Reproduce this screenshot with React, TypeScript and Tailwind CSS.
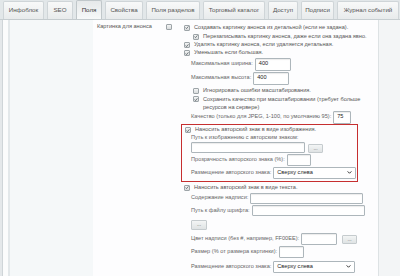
import React from 'react';

const tabs = [
  { label: 'Инфоблок', w: 'w-[41px]' },
  { label: 'SEO', w: 'w-[26px]' },
  { label: 'Поля', w: 'w-[26px]', active: true },
  { label: 'Свойства', w: 'w-[38px]' },
  { label: 'Поля разделов', w: 'w-[54px]' },
  { label: 'Торговый каталог', w: 'w-[62px]' },
  { label: 'Доступ', w: 'w-[30px]' },
  { label: 'Подписи', w: 'w-[33px]' },
  { label: 'Журнал событий', w: 'w-[62px]' },
];

function Cb({ checked = false }: { checked?: boolean }) {
  return (
    <span className="w-[6px] h-[6px] shrink-0 rounded-[1px] border border-[#9da4a8] bg-gradient-to-b from-[#f4f5f5] to-[#d9dcdd] flex items-center justify-center">
      {checked && (
        <svg viewBox="0 0 6 6" className="w-[5px] h-[5px]">
          <path d="M0.8 3.1 L2.3 4.6 L5.2 1.2" fill="none" stroke="#4b5358" strokeWidth="1.1" />
        </svg>
      )}
    </span>
  );
}

function Inp({ w, h = 'h-[13px]', value }: { w: string; h?: string; value?: string }) {
  return (
    <span className={`${w} ${h} shrink-0 border border-[#adb6bb] rounded-[1px] bg-white flex items-center pl-[3px] text-[5.6px] text-[#222] shadow-[inset_0_1px_1px_rgba(0,0,0,0.08)]`}>
      {value}
    </span>
  );
}

function Btn({ className = '' }: { className?: string }) {
  return (
    <span className={`w-[15px] h-[9px] shrink-0 rounded-[1px] border border-[#c5cbce] bg-gradient-to-b from-[#f3f5f5] to-[#dfe3e4] flex items-center justify-center text-[5px] leading-none text-[#555] ${className}`}>
      ...
    </span>
  );
}

function Sel({ w }: { w: string }) {
  return (
    <span className={`${w} h-[12px] shrink-0 border border-[#adb6bb] rounded-[1px] bg-white flex items-center justify-between pl-[3px] pr-[3px] text-[5.6px] text-[#222]`}>
      Сверху слева
      <svg viewBox="0 0 6 4" className="w-[5px] h-[3px]">
        <path d="M0.5 0.5 L3 3 L5.5 0.5" fill="none" stroke="#222" strokeWidth="1.2" />
      </svg>
    </span>
  );
}

function Row({ h, className = '', children }: { h: string; className?: string; children: React.ReactNode }) {
  return <div className={`${h} flex items-center ${className}`}>{children}</div>;
}

export default function App() {
  return (
    <div className="w-[400px] h-[276px] overflow-hidden bg-[#e2e7e9] font-['Liberation_Sans',Arial,sans-serif] text-[5.6px] text-[#555] leading-none">
      {/* tabs */}
      <div className="h-[20px] flex items-end gap-[3px] pl-[3px] border-b border-[#c7ced1]">
        {tabs.map((t) => (
          <div
            key={t.label}
            className={`${t.w} flex items-center justify-center rounded-t-[2px] border border-b-0 text-[6.2px] whitespace-nowrap ${
              t.active
                ? 'h-[19px] bg-gradient-to-b from-[#e6e9ea] to-[#f7f9f9] border-[#c0c7ca] text-[#333]'
                : 'h-[18px] bg-gradient-to-b from-[#f8f9f9] to-[#e8ebec] border-[#cfd5d8] text-[#555]'
            }`}
          >
            {t.label}
          </div>
        ))}
      </div>

      <div className="flex h-[256px]">
        <div className="w-[3px] bg-[#e4e8ea] border-r border-[#cfd5d8]" />
        <div className="w-[5px] bg-[#fbfcfc]" />
        <div className="w-[85px] bg-[#f5f8f9] border-l-2 border-[#e3e8ea] shadow-[1px_0_1px_rgba(0,0,0,0.08)]" />

        {/* form */}
        <div className="flex-1 flex bg-[#fdfdfe] pt-[3px]">
          <div className="w-[88px] shrink-0 flex justify-between pl-[4px] pr-[9px] h-[8px] items-center">
            <span>Картинка для анонса</span>
            <Cb />
          </div>

          <div className="flex-1 flex flex-col">
            <Row h="h-[9px]" className="pl-[3px] gap-[4px]">
              <Cb checked />
              <span>Создавать картинку анонса из детальной (если не задана).</span>
            </Row>
            <Row h="h-[9px]" className="pl-[12px] gap-[4px]">
              <Cb checked />
              <span>Перезаписывать картинку анонса, даже если она задана явно.</span>
            </Row>
            <Row h="h-[8px]" className="pl-[3px] gap-[4px]">
              <Cb checked />
              <span>Удалять картинку анонса, если удаляется детальная.</span>
            </Row>
            <Row h="h-[8px]" className="pl-[3px] gap-[4px]">
              <Cb checked />
              <span>Уменьшать если большая.</span>
            </Row>
            <Row h="h-[14px]" className="pl-[10px] gap-[2px] text-[#666]">
              <span>Максимальная ширина:</span>
              <Inp w="w-[36px]" value="400" />
            </Row>
            <Row h="h-[14px]" className="pl-[10px] gap-[2px] text-[#666]">
              <span>Максимальная высота:</span>
              <Inp w="w-[36px]" value="400" />
            </Row>
            <Row h="h-[9px]" className="pl-[12px] gap-[4px] mt-[1px]">
              <Cb />
              <span>Игнорировать ошибки масштабирования.</span>
            </Row>
            <div className="pl-[12px] flex gap-[4px] pt-[1px] h-[15px]">
              <Cb checked />
              <span className="leading-[8px] w-[160px] -mt-[1px]">
                Сохранить качество при масштабировании (требует больше
                <br />
                ресурсов на сервере)
              </span>
            </div>
            <Row h="h-[14px]" className="pl-[10px] gap-[2px] text-[#666]">
              <span>Качество (только для JPEG, 1-100, по умолчанию 95):</span>
              <Inp w="w-[18px]" value="75" />
            </Row>

            {/* watermark image */}
            <div className="w-[177px] h-[58px] border border-[#c62f30] flex flex-col pl-[3px] pt-[1px]">
              <Row h="h-[8px]" className="gap-[4px]">
                <Cb checked />
                <span>Наносить авторский знак в виде изображения.</span>
              </Row>
              <Row h="h-[7px]" className="pl-[6px] text-[#666]">
                <span>Путь к изображению с авторским знаком:</span>
              </Row>
              <Row h="h-[12px]" className="pl-[6px] gap-[3px] items-end">
                <Inp w="w-[114px]" h="h-[11px]" />
                <Btn />
              </Row>
              <Row h="h-[13px]" className="pl-[6px] gap-[2px] text-[#666]">
                <span>Прозрачность авторского знака (%):</span>
                <Inp w="w-[24px]" h="h-[12px]" />
              </Row>
              <Row h="h-[13px]" className="pl-[6px] gap-[2px] text-[#666]">
                <span>Размещение авторского знака:</span>
                <Sel w="w-[83px]" />
              </Row>
            </div>

            {/* watermark text */}
            <Row h="h-[9px]" className="pl-[3px] gap-[4px] mt-[1px]">
              <Cb checked />
              <span>Наносить авторский знак в виде текста.</span>
            </Row>
            <Row h="h-[12px]" className="pl-[10px] gap-[2px] text-[#666]">
              <span>Содержание надписи:</span>
              <Inp w="w-[113px]" h="h-[11px]" />
            </Row>
            <Row h="h-[13px]" className="pl-[10px] gap-[2px] text-[#666]">
              <span>Путь к файлу шрифта:</span>
              <Inp w="w-[113px]" h="h-[11px]" />
            </Row>
            <Row h="h-[15px]" className="pl-[10px]">
              <Btn className="w-[16px] h-[10px]" />
            </Row>
            <Row h="h-[13px]" className="pl-[10px] gap-[2px] text-[#666]">
              <span>Цвет надписи (без #, например, FF00EE):</span>
              <Inp w="w-[36px]" h="h-[12px]" />
              <Btn className="ml-[3px] mt-[2px]" />
            </Row>
            <Row h="h-[14px]" className="pl-[10px] gap-[2px] text-[#666]">
              <span>Размер (% от размера картинки):</span>
              <Inp w="w-[25px]" h="h-[12px]" />
            </Row>
            <Row h="h-[15px]" className="pl-[10px] gap-[2px] text-[#666]">
              <span>Размещение авторского знака:</span>
              <Sel w="w-[82px]" />
            </Row>
          </div>
        </div>

        <div className="w-[22px] bg-[#f3f5f6] border-l border-[#dde2e4]" />
      </div>
    </div>
  );
}
